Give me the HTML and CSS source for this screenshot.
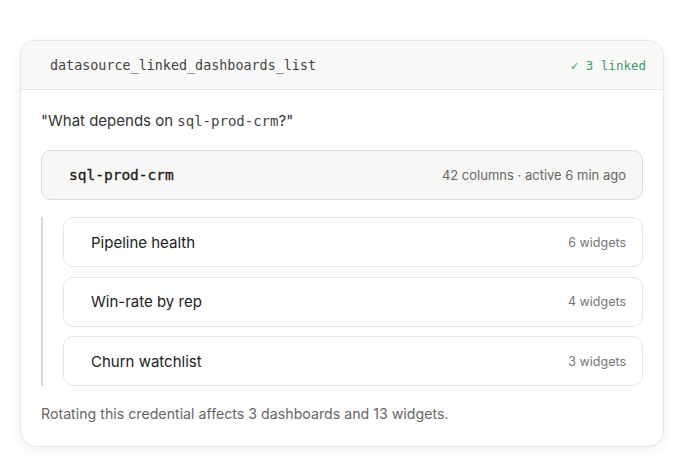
FILE: index.html
```html
<!DOCTYPE html>
<html>
<head>
    <title>Linked dashboards</title>
    <link rel="stylesheet" href="styles.css">
</head>
<body>
    <div class="card">
        <div class="card-header">
            <span class="tool-name">datasource_linked_dashboards_list</span>
            <span class="tool-status">✓ 3 linked</span>
        </div>
        <div class="card-body">
            <p class="question">"What depends on <code>sql-prod-crm</code>?"</p>

            <div class="source">
                <span class="source-name">sql-prod-crm</span>
                <span class="source-meta">42 columns · active 6 min ago</span>
            </div>

            <div class="tree">
                <div class="dash">
                    <span class="dash-name">Pipeline health</span>
                    <span class="dash-count">6 widgets</span>
                </div>
                <div class="dash">
                    <span class="dash-name">Win-rate by rep</span>
                    <span class="dash-count">4 widgets</span>
                </div>
                <div class="dash">
                    <span class="dash-name">Churn watchlist</span>
                    <span class="dash-count">3 widgets</span>
                </div>
            </div>

            <p class="summary">Rotating this credential affects 3 dashboards and 13 widgets.</p>
        </div>
    </div>
</body>
</html>
```

FILE: styles.css
```css
body {
    margin: 0;
    padding: 40px 12px 13px 20px;
    background: #fff;
    font-family: Inter, "Noto Sans", sans-serif;
    color: #222;
}
.card {
    width: 644px;
    box-sizing: border-box;
    border: 1px solid #e6e6e3;
    border-radius: 16px;
    background: #fff;
    box-shadow: 0 4px 14px rgba(0, 0, 0, 0.06);
    overflow: hidden;
}
.card-header {
    display: flex;
    justify-content: space-between;
    align-items: center;
    height: 48px;
    padding: 0 17px 0 29px;
    background: #f9f9f7;
    border-bottom: 1px solid #e6e6e3;
}
.tool-name {
    font-family: "DejaVu Sans Mono", monospace;
    font-size: 13.4px;
    color: #444;
}
.tool-status {
    font-family: "DejaVu Sans Mono", monospace;
    font-size: 12.5px;
    color: #3d9a6b;
}
.card-body {
    padding: 20px 20px 22px 20px;
}
.question {
    margin: 0 0 18px 0;
    font-size: 15px;
    color: #333;
    line-height: 22px;
}
.question code {
    font-family: "DejaVu Sans Mono", monospace;
    font-size: 14px;
    color: #444;
}
.source {
    display: flex;
    justify-content: space-between;
    align-items: center;
    height: 50px;
    box-sizing: border-box;
    padding: 0 16px 0 27px;
    background: #f7f7f5;
    border: 1px solid #dcdcd8;
    border-radius: 10px;
}
.source-name {
    font-family: "DejaVu Sans Mono", monospace;
    font-size: 14.5px;
    color: #1a1a1a;
    -webkit-text-stroke: 0.3px #1a1a1a;
}
.source-meta {
    font-size: 13px;
    color: #666;
}
.tree {
    display: flex;
    flex-direction: column;
    gap: 9.5px;
    margin-top: 17px;
    padding-left: 20px;
    border-left: 2px solid #d4d8ea;
}
.dash {
    display: flex;
    justify-content: space-between;
    align-items: center;
    height: 50px;
    box-sizing: border-box;
    padding: 0 16px 0 27px;
    border: 1px solid #e6e6e3;
    border-radius: 10px;
}
.dash-name {
    font-size: 15px;
    color: #222;
}
.dash-count {
    font-size: 12.5px;
    color: #777;
}
.summary {
    margin: 18px 0 0 0;
    font-size: 14.2px;
    color: #666;
    line-height: 20px;
}
```
